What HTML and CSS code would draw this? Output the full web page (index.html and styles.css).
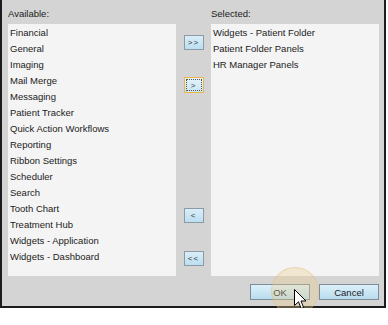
FILE: index.html
```html
<!DOCTYPE html>
<html>
<head>
	<meta charset="utf-8">
	<link rel="stylesheet" href="styles.css">
</head>
<body>
	<div class="dialog">
		<div class="panes">
			<div class="pane">
				<div class="caption">Available:</div>
				<ul class="listbox">
					<li>Financial</li>
					<li>General</li>
					<li>Imaging</li>
					<li>Mail Merge</li>
					<li>Messaging</li>
					<li>Patient Tracker</li>
					<li>Quick Action Workflows</li>
					<li>Reporting</li>
					<li>Ribbon Settings</li>
					<li>Scheduler</li>
					<li>Search</li>
					<li>Tooth Chart</li>
					<li>Treatment Hub</li>
					<li>Widgets - Application</li>
					<li>Widgets - Dashboard</li>
				</ul>
			</div>

			<div class="mover">
				<button class="move add-all">&gt;&gt;</button>
				<button class="move add focus"><span>&gt;</span></button>
				<button class="move remove">&lt;</button>
				<button class="move remove-all">&lt;&lt;</button>
			</div>

			<div class="pane">
				<div class="caption">Selected:</div>
				<ul class="listbox">
					<li>Widgets - Patient Folder</li>
					<li>Patient Folder Panels</li>
					<li>HR Manager Panels</li>
				</ul>
			</div>
		</div>

		<div class="footer">
			<button class="cmd">OK</button>
			<button class="cmd">Cancel</button>
		</div>

		<div class="click-ring"></div>
		<svg class="cursor" width="13" height="21" viewBox="0 0 13 21">
			<path d="M0.5 0.5 L0.5 16.5 L4.5 12.8 L7.2 19.5 L9.6 18.5 L7 12 L12 12 Z" fill="#fff" stroke="#000" stroke-width="1" stroke-linejoin="miter"/>
		</svg>
	</div>
</body>
</html>
```

FILE: styles.css
```css
html, body {
	margin: 0;
	padding: 0;
	background: #fff;
}

body {
	font-family: "Liberation Sans", Arial, sans-serif;
	font-size: 9.5px;
	color: #1b1b1b;
}

.dialog {
	position: relative;
	width: 371px;
	height: 300px;
	padding: 6px 5px 0 6px;
	background: #d4d4d4;
	border-left: 2px solid #1c1c1c;
	border-right: 2px solid #1c1c1c;
	border-bottom: 2px solid #1c1c1c;
	display: flex;
	flex-direction: column;
}

.panes {
	display: flex;
}

.pane {
	width: 168px;
	display: flex;
	flex-direction: column;
}

.caption {
	height: 16px;
	line-height: 16px;
	margin-bottom: 2px;
}

.listbox {
	list-style: none;
	margin: 0;
	padding: 1px 0 0 2px;
	height: 251px;
	background: #f4f4f4;
}

.listbox li {
	height: 16px;
	line-height: 16px;
	white-space: nowrap;
}

.mover {
	width: 35px;
	display: flex;
	flex-direction: column;
	align-items: center;
	padding-top: 29px;
}

.move {
	width: 20px;
	height: 15px;
	padding: 0;
	font-family: "Liberation Sans", sans-serif;
	font-size: 8px;
	letter-spacing: 1px;
	color: #333;
	border: 1px solid #8c9aa5;
	background: linear-gradient(#d9eef9, #bcdff0);
	display: flex;
	align-items: center;
	justify-content: center;
}

.add {
	margin-top: 27px;
}

.remove {
	margin-top: 115px;
}

.remove-all {
	margin-top: 28px;
}

.focus {
	height: 16px;
	border-color: #eab54a;
	background: linear-gradient(#e4f3fb, #c9e6f3);
}

.focus span {
	flex: 1;
	align-self: stretch;
	margin: 1px;
	border: 1px dotted #555;
	display: flex;
	align-items: center;
	justify-content: center;
}

.footer {
	display: flex;
	justify-content: flex-end;
	gap: 9px;
	margin-top: 8px;
}

.cmd {
	width: 60px;
	height: 16px;
	padding: 0;
	font-family: "Liberation Sans", Arial, sans-serif;
	font-size: 9.5px;
	color: #1b1b1b;
	border: 1px solid #7e8c97;
	background: linear-gradient(#dcf0fa, #b9dcee);
}

.click-ring {
	position: absolute;
	left: 269px;
	top: 267px;
	width: 48px;
	height: 48px;
	border-radius: 50%;
	background: rgba(236, 205, 140, 0.33);
	box-shadow: inset 0 0 0 1px rgba(222, 180, 110, 0.3);
}

.cursor {
	position: absolute;
	left: 292px;
	top: 289px;
}
```
